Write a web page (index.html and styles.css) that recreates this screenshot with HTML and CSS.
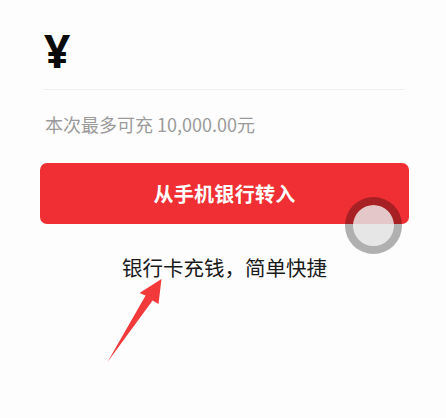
FILE: index.html
```html
<!DOCTYPE html>
<html lang="zh">
<head>
<meta charset="utf-8">
<link rel="stylesheet" href="styles.css">
</head>
<body>
<div class="page">
  <div class="amount"><span class="yen">¥</span></div>
  <div class="divider"></div>
  <div class="limit">本次最多可充 10,000.00元</div>
  <button class="btn">从手机银行转入</button>
  <div class="caption">银行卡充钱，简单快捷</div>
  <span class="touch"></span>
  <svg class="arrow" width="446" height="418" viewBox="0 0 446 418">
    <polygon points="161.5,279 158.5,304 152.6,300.4 107.5,362 145.6,295.6 139.5,293" fill="#f2393b"/>
  </svg>
</div>
</body>
</html>
```
FILE: styles.css
```css
html, body {
  margin: 0;
  padding: 0;
  background: #fdfdfd;
}
.page {
  position: relative;
  width: 446px;
  height: 418px;
  box-sizing: border-box;
  padding: 0 37px 0 40px;
  display: flex;
  flex-direction: column;
  font-family: "Noto Sans CJK SC", "Noto Sans", sans-serif;
  overflow: hidden;
}
.amount {
  height: 89px;
  padding-left: 4px;
  display: flex;
  align-items: flex-start;
}
.yen {
  font-family: "Noto Sans", sans-serif;
  font-weight: 700;
  font-size: 46px;
  line-height: 1;
  margin-top: 27px;
  color: #0a0a0a;
}
.divider {
  height: 1px;
  background: #f0f0f0;
  margin: 0 4px 0 3px;
}
.limit {
  margin-top: 21px;
  padding-left: 5px;
  font-size: 18px;
  line-height: 26px;
  color: #9b9b9b;
}
.btn {
  margin-top: 26px;
  height: 61px;
  border: none;
  border-radius: 7px;
  background: #ef2f33;
  color: #fff;
  font-family: "Noto Sans CJK SC", sans-serif;
  font-weight: 700;
  font-size: 20px;
  padding: 0;
  letter-spacing: 0.3px;
}
.caption {
  margin-top: 30px;
  text-align: center;
  font-size: 20.5px;
  line-height: 26px;
  color: #1a1a1a;
  font-weight: 400;
}
.touch {
  position: absolute;
  left: 345px;
  top: 197px;
  width: 41px;
  height: 41px;
  border-radius: 50%;
  border: 8.5px solid rgba(0, 0, 0, 0.3);
  background: rgba(226, 226, 226, 0.86);
  background-clip: padding-box;
}
.arrow {
  position: absolute;
  left: 0;
  top: 0;
}
```
